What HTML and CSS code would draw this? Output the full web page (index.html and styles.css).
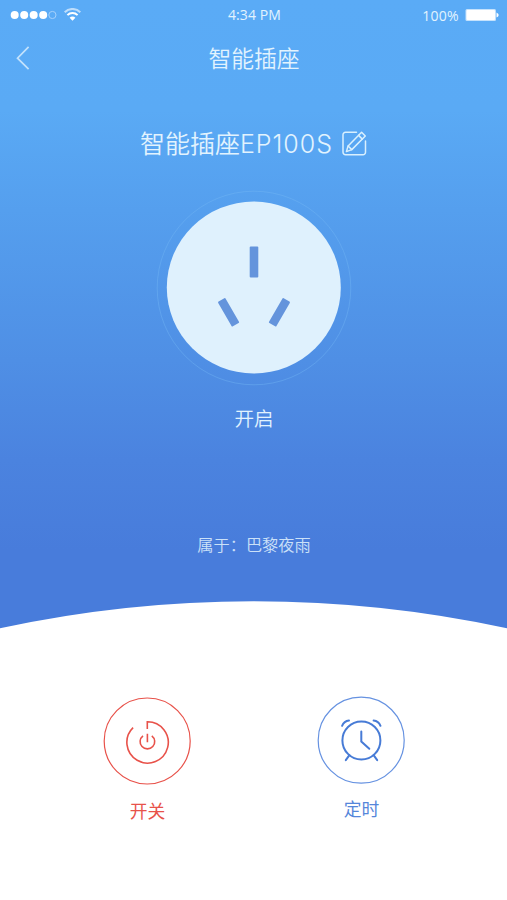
FILE: index.html
```
<!DOCTYPE html>
<html lang="zh-CN">
<head>
    <meta charset="UTF-8">
    <title>智能插座</title>
    <link rel="stylesheet" href="styles.css">
</head>
<body>
    <div class="hero">
        <div class="status">
            <div class="status__left">
                <svg width="72" height="14" viewBox="0 0 72 14">
                    <g fill="#fff">
                        <circle cx="4.7" cy="7" r="4"/>
                        <circle cx="14.2" cy="7" r="4"/>
                        <circle cx="23.7" cy="7" r="4"/>
                        <circle cx="33.2" cy="7" r="4"/>
                    </g>
                    <circle cx="42.4" cy="7" r="3.6" fill="none" stroke="#a6d1fb" stroke-width="1"/>
                    <g fill="none" stroke="#fff" stroke-width="2">
                        <path d="M54.7 4.2a11 11 0 0 1 15.6 0" opacity=".6"/>
                        <path d="M57.4 7.1a7.2 7.2 0 0 1 10.2 0"/>
                    </g>
                    <path d="M59.6 9.7a4 4 0 0 1 5.8 0l-2.9 3.1z" fill="#fff"/>
                </svg>
            </div>
            <div class="status__time">4:34 PM</div>
            <div class="status__right">
                <span>100%</span>
                <svg width="34" height="14" viewBox="0 0 34 14">
                    <rect x=".5" y="1" width="30.5" height="12" rx="1.5" fill="#fff" opacity=".65"/>
                    <rect x="1.5" y="2" width="28.5" height="10" rx="1" fill="#fff"/>
                    <path d="M31.5 4.5q2.2 1 2.2 2.5t-2.2 2.5z" fill="#fff"/>
                </svg>
            </div>
        </div>
        <div class="nav">
            <a href="#" class="nav__back">
                <svg width="14" height="24" viewBox="0 0 14 24" fill="none" stroke="#c3e2fc" stroke-width="1.7"><path d="M12.6.8L1.5 12.2l11.1 11"/></svg>
            </a>
            <h1 class="nav__title">智能插座</h1>
        </div>
        <div class="device">
            <span class="device__name">智能插座<span class="device__model">EP100S</span></span>
            <svg class="device__edit" width="25" height="25" viewBox="0 0 25 25" fill="none" stroke="#d9f0fe" stroke-width="1.5" stroke-linejoin="round" stroke-linecap="round">
                <path d="M14.5 1.2H3.5a2.5 2.5 0 0 0-2.5 2.5v17.6a2.5 2.5 0 0 0 2.5 2.5h17.5a2.5 2.5 0 0 0 2.5-2.5V10"/>
                <path d="M19.6 1.3l3.7 3.7L9.8 18.6l-5.4 2 1.7-5.6z"/>
                <path d="M16.6 4.4l3.7 3.7M6.1 15l3.7 3.6"/>
            </svg>
        </div>
        <div class="socket">
            <svg width="196" height="196" viewBox="0 0 196 196">
                <circle cx="98" cy="98" r="96.8" fill="none" stroke="#76b8f6" stroke-opacity=".4"/>
                <ellipse cx="97.8" cy="97.5" rx="87" ry="86" fill="#dff1fd"/>
                <g fill="#6494dc">
                    <rect x="93.7" y="56.5" width="8.6" height="31" rx="1"/>
                    <rect x="68.3" y="108" width="8.6" height="28.6" rx="1" transform="rotate(-30 72.6 122.3)"/>
                    <rect x="119.1" y="108" width="8.6" height="28.6" rx="1" transform="rotate(30 123.4 122.3)"/>
                </g>
            </svg>
        </div>
        <p class="state">开启</p>
        <p class="owner">属于：巴黎夜雨</p>
        <svg class="curve" width="507" height="28" viewBox="0 0 507 28"><path d="M0 27.3A1203 1203 0 0 1 507 27.3V28H0z" fill="#fff"/></svg>
    </div>
    <div class="actions">
        <a href="#" class="action action--power">
            <svg width="88" height="88" viewBox="0 0 88 88" fill="none" stroke="#e8524a" stroke-width="1.6">
                <circle cx="44.2" cy="44" r="43" stroke-width="1.2"/>
                <path d="M44.3 32v-7.3A20.7 20.7 0 1 1 30.1 30.6"/>
                <path d="M40 38.8a7.3 7.3 0 1 0 8.8 0M44.4 36.8v8.5"/>
            </svg>
            <span>开关</span>
        </a>
        <a href="#" class="action action--timer">
            <svg width="88" height="88" viewBox="0 0 88 88" fill="none" stroke="#477bd6" stroke-width="2" stroke-linecap="round">
                <circle cx="44.2" cy="44.2" r="43" stroke="#6692e1" stroke-width="1.2"/>
                <circle cx="44.4" cy="44.4" r="19"/>
                <path d="M44.3 35.6v9.9l8 7.3M32.4 59.2l-3.6 5M56.6 59.2l3.6 5"/>
                <path d="M25.1 29.8q2-4.8 6.9-5.3M63.5 29.8q-2-4.8-6.9-5.3"/>
            </svg>
            <span>定时</span>
        </a>
    </div>
</body>
</html>
```
FILE: styles.css
```
* {
    box-sizing: border-box;
    padding: 0;
    margin: 0;
}

body {
    height: 900px;
    background: #fff;
    font-family: "Noto Sans CJK SC", sans-serif;
    overflow: hidden;
}

a {
    color: inherit;
    text-decoration: none;
}

svg { display: block; }

.hero {
    display: flex;
    flex-direction: column;
    height: 629px;
    color: #e2f3fe;
    background: linear-gradient(#5aabf6 0, #5aaaf5 110px, #559fee 210px, #4f8fe5 360px, #4b83df 460px, #487cdb 550px, #487cdb 100%);
}

.status {
    display: grid;
    grid-template-columns: 1fr auto 1fr;
    align-items: center;
    height: 30px;
    padding: 0 8px 0 10px;
    font-family: "Open Sans", sans-serif;
    font-size: 14px;
}

.status__time {
    margin: -2px 0 0 0;
    letter-spacing: 0.1px;
}

.status__right {
    display: flex;
    justify-content: flex-end;
    align-items: center;
    gap: 6px;
}

.status__right span { letter-spacing: 0.3px; }

.nav {
    display: grid;
    grid-template-columns: 1fr auto 1fr;
    align-items: center;
    height: 56px;
    padding: 0 16px;
}

.nav__title {
    margin: -2px 0 0 1px;
    font-size: 22.8px;
    font-weight: 350;
}

.device {
    display: flex;
    justify-content: center;
    align-items: center;
    gap: 9px;
    height: 40px;
    margin-top: 37px;
    font-size: 25px;
    font-weight: 350;
}

.device__name {
    margin-top: -3px;
    white-space: nowrap;
}

.device__model {
    font-family: Inter, sans-serif;
    font-size: 25px;
    font-weight: 300;
    letter-spacing: 1px;
}

.socket {
    display: flex;
    justify-content: center;
    margin-top: 27px;
}

.state, .owner {
    font-weight: 350;
    text-align: center;
}

.state {
    margin-top: 17px;
    padding-left: 1px;
    font-size: 19.6px;
    line-height: 30px;
}

.owner {
    margin-top: 99px;
    padding-left: 1px;
    font-size: 16.2px;
    line-height: 24px;
    opacity: 0.85;
}

.curve { margin-top: auto; }

.actions {
    display: flex;
    justify-content: center;
    gap: 126px;
    padding-top: 67px;
}

.action {
    display: flex;
    flex-direction: column;
    align-items: center;
    gap: 13px;
    font-size: 17.8px;
    line-height: 24px;
}

.action span { padding-left: 2px; }

.action--power {
    padding-top: 1px;
    color: #e8524a;
}

.action--timer {
    gap: 12px;
    color: #5586da;
}
```
